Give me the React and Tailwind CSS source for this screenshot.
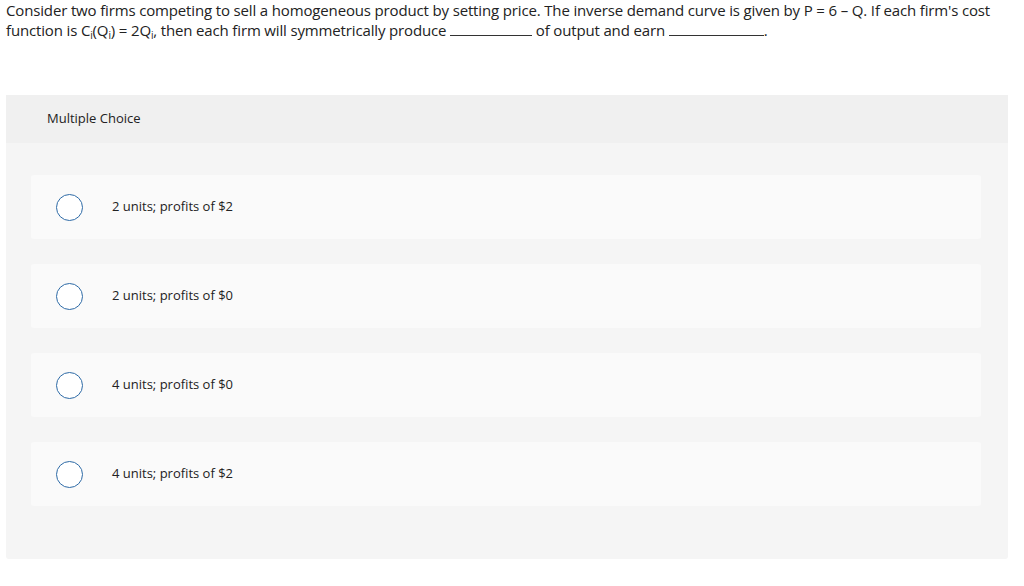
import React from 'react'

const options = [
  '2 units; profits of $2',
  '2 units; profits of $0',
  '4 units; profits of $0',
  '4 units; profits of $2',
]

const Blank = ({ w }) => (
  <span className={`inline-block border-b border-[#333] h-[14px] align-baseline ${w}`} />
)

const Sub = ({ children }) => (
  <span className="relative top-[3px] text-[10px] leading-none">{children}</span>
)

const App = () => {
  return (
    <div className="bg-white w-[1024px] h-[586px] overflow-hidden text-[#222]" style={{ fontFamily: '"Open Sans", Lato, sans-serif' }}>
      <p className="px-[6px] text-[15px] leading-[20px] tracking-[-0.15px] w-[1012px]">
        Consider two firms competing to sell a homogeneous product by setting price. The inverse demand curve is given by P = 6 – Q. If each firm's cost function is C<Sub>i</Sub>(Q<Sub>i</Sub>) = 2Q<Sub>i</Sub>, then each firm will symmetrically produce <Blank w="w-[82px]" /> of output and earn <Blank w="w-[95px]" />.
      </p>

      <div className="mt-[55px] mx-[6px] w-[1002px] h-[464px] bg-[#f5f5f5] rounded-b-[3px]">
        <div className="h-[48px] bg-[#f0f0f0] flex items-center pl-[41px] text-[13px]">
          Multiple Choice
        </div>
        <div className="pt-[32px] px-[25px] flex flex-col gap-[25px]">
          {options.map((o) => (
            <div key={o} className="h-[64px] w-[950px] bg-[#fafafa] rounded-[3px] flex items-center">
              <span className="ml-[25px] w-[27px] h-[27px] rounded-full border-[1.5px] border-[#2d6aa6] bg-white" />
              <span className="ml-[29px] text-[13px]">{o}</span>
            </div>
          ))}
        </div>
      </div>
    </div>
  )
}

export default App
